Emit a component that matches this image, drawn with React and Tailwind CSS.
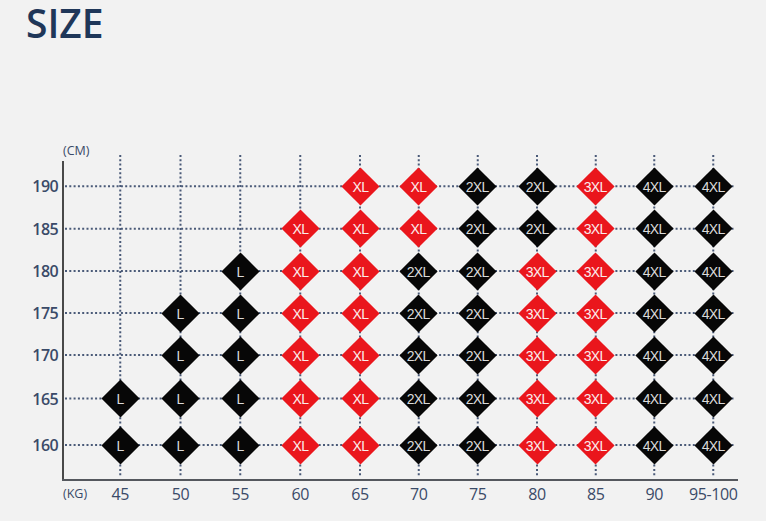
import React from "react";

const COLS = [60.5, 60, 59.5, 60.5, 59, 58.5, 59.5, 59, 58.5, 58.5, 59.5];
const START = 90;
const CENTERS = COLS.map(
  (w, i) => START + COLS.slice(0, i).reduce((a, b) => a + b, 0) + w / 2
);
const ROW_Y = [46.25, 88.75, 131, 173, 215, 258.5, 305];
const X_LABELS = ["45", "50", "55", "60", "65", "70", "75", "80", "85", "90", "95-100"];
const Y_LABELS = ["190", "185", "180", "175", "170", "165", "160"];
const _ = null;
const DATA = [
  [_, _, _, _, "XL", "XL", "2XL", "2XL", "3XL", "4XL", "4XL"],
  [_, _, _, "XL", "XL", "XL", "2XL", "2XL", "3XL", "4XL", "4XL"],
  [_, _, "L", "XL", "XL", "2XL", "2XL", "3XL", "3XL", "4XL", "4XL"],
  [_, "L", "L", "XL", "XL", "2XL", "2XL", "3XL", "3XL", "4XL", "4XL"],
  [_, "L", "L", "XL", "XL", "2XL", "2XL", "3XL", "3XL", "4XL", "4XL"],
  ["L", "L", "L", "XL", "XL", "2XL", "2XL", "3XL", "3XL", "4XL", "4XL"],
  ["L", "L", "L", "XL", "XL", "2XL", "2XL", "3XL", "3XL", "4XL", "4XL"],
];

function Diamond({ label }) {
  const red = label === "XL" || label === "3XL";
  return (
    <div
      className={`w-[27px] h-[27px] rotate-45 flex items-center justify-center ${
        red ? "bg-[#ea161c]" : "bg-[#070707]"
      }`}
    >
      <span
        className={`-rotate-45 font-['Liberation_Sans',Arial,sans-serif] text-[14px] leading-none tracking-[-0.6px] ${
          red ? "text-[#fbecec]" : "text-[#dadada]"
        }`}
      >
        {label}
      </span>
    </div>
  );
}

function GridLines() {
  return (
    <svg
      className="absolute inset-0 w-full h-full"
      viewBox="0 0 766 381"
      width="766"
      height="381"
    >
      {ROW_Y.map((y) => (
        <line
          key={"h" + y}
          x1="65"
          x2="735"
          y1={y}
          y2={y}
          stroke="#4a5a78"
          strokeWidth="2"
          strokeDasharray="2 2.3"
        />
      ))}
      {CENTERS.map((x) => (
        <line
          key={"v" + x}
          x1={x}
          x2={x}
          y1="15"
          y2="336"
          stroke="#4a5a78"
          strokeWidth="2"
          strokeDasharray="2 2.3"
        />
      ))}
      <line x1="63" x2="63" y1="21" y2="341" stroke="#1e1e1e" strokeWidth="1.6" />
      <line x1="62" x2="738" y1="340" y2="340" stroke="#55585e" strokeWidth="2" />
    </svg>
  );
}

export default function App() {
  return (
    <div className="w-[766px] h-[521px] bg-[#f2f2f2] overflow-hidden flex flex-col font-['Open_Sans',sans-serif]">
      <div className="h-[140px] pl-[26px] pt-[1px]">
        <div className="inline-block text-[39px] leading-[44px] font-semibold text-[#1f3759]">
          SIZE
        </div>
      </div>
      <div className="relative h-[381px]">
        <GridLines />
        <div className="relative grid grid-cols-[63px_27px_60.5px_60px_59.5px_60.5px_59px_58.5px_59.5px_59px_58.5px_58.5px_59.5px] grid-rows-[25px_42.5px_42.5px_42px_42px_42px_45px_48px_auto]">
          <div />
          <div className="col-span-12 pt-[4px] text-[12.5px] leading-[13px] text-[#3a4a68]">
            (CM)
          </div>
          {DATA.map((row, r) => (
            <React.Fragment key={r}>
              <div className="flex items-center justify-end pr-[5px] text-[16px] leading-[16px] font-semibold tracking-[-0.6px] text-[#3a4a68]">
                {Y_LABELS[r]}
              </div>
              <div />
              {row.map((cell, c) => (
                <div key={c} className="flex items-center justify-center">
                  {cell ? <Diamond label={cell} /> : null}
                </div>
              ))}
            </React.Fragment>
          ))}
          <div />
          <div className="pt-[18px] text-[12.5px] leading-[13px] whitespace-nowrap text-[#3a4a68]">
            (KG)
          </div>
          {X_LABELS.map((l) => (
            <div
              key={l}
              className="pt-[17px] text-center text-[16px] leading-[16px] tracking-[-0.4px] whitespace-nowrap text-[#3a4a68]"
            >
              {l}
            </div>
          ))}
        </div>
      </div>
    </div>
  );
}
